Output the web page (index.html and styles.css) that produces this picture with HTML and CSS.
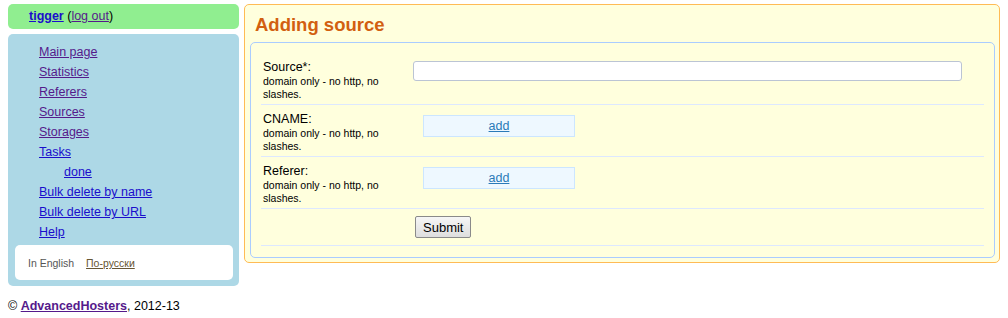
FILE: index.html
```html
<!DOCTYPE html>
<html lang="en">
<head>
  <meta charset="UTF-8">
  <title>Adding source</title>
  <link rel="stylesheet" href="styles.css">
</head>
<body>
  <div class="page">
    <div class="sidebar">
      <div class="user-box">
        <a class="user" href="#">tigger</a> (<a class="logout" href="#">log out</a>)
      </div>
      <div class="menu-box">
        <ul class="menu">
          <li><a class="visited" href="#">Main page</a></li>
          <li><a class="visited" href="#">Statistics</a></li>
          <li><a class="visited" href="#">Referers</a></li>
          <li><a class="visited" href="#">Sources</a></li>
          <li><a class="visited" href="#">Storages</a></li>
          <li><a href="#">Tasks</a></li>
          <li class="sub"><a href="#">done</a></li>
          <li><a href="#">Bulk delete by name</a></li>
          <li><a href="#">Bulk delete by URL</a></li>
          <li><a href="#">Help</a></li>
        </ul>
        <div class="lang">
          <span>In English</span>
          <a href="#">По-русски</a>
        </div>
      </div>
    </div>

    <div class="content">
      <h1>Adding source</h1>
      <div class="form-box">
        <form>
          <table class="form-table">
            <tr>
              <td class="label">Source*:<div class="hint">domain only - no http, no slashes.</div></td>
              <td class="field"><input type="text" class="text-input"></td>
            </tr>
            <tr>
              <td class="label">CNAME:<div class="hint">domain only - no http, no slashes.</div></td>
              <td class="field add-field"><div class="add-box"><a href="#">add</a></div></td>
            </tr>
            <tr>
              <td class="label">Referer:<div class="hint">domain only - no http, no slashes.</div></td>
              <td class="field add-field"><div class="add-box"><a href="#">add</a></div></td>
            </tr>
            <tr class="submit-row">
              <td class="label"></td>
              <td class="field"><button type="submit">Submit</button></td>
            </tr>
          </table>
        </form>
      </div>
    </div>
  </div>

  <div class="footer">
    © <a href="#">AdvancedHosters</a>, 2012-13
  </div>
</body>
</html>
```

FILE: styles.css
```css
body {
  font-family: 'Liberation Sans', Arial, sans-serif;
  font-size: 12.5px; line-height: 15px; color: #000;
  margin: 4px 8px; background: #fff;
}
a { color: #1a0dcc; }
a.visited { color: #551a8b; }

.page { display: flex; align-items: flex-start; gap: 5px; }

/* left column */
.sidebar { width: 231px; flex-shrink: 0; }
.user-box {
  background: #90ee90; border-radius: 5px;
  height: 25px; box-sizing: border-box; padding: 5px 21px;
}
.user-box .user { font-weight: bold; color: #1a0dcc; }
.user-box .logout { color: #551a8b; }

.menu-box {
  background: #add8e6; border-radius: 5px;
  margin-top: 5px; padding: 8px 6px 6px 7px;
}
.menu { list-style: none; margin: 0; padding: 0 0 0 24px; }
.menu li { line-height: 20px; height: 20px; }
.menu li.sub { padding-left: 25px; }
.lang {
  background: #fff; border-radius: 5px; margin-top: 3px;
  height: 35px; box-sizing: border-box; padding: 12px 13px;
  font-size: 10.5px; line-height: 13px; color: #555;
}
.lang a { color: #665533; margin-left: 9px; }

/* main panel */
.content {
  flex: 1; background: #ffffdd; border: 1px solid #ffbb55; border-radius: 5px;
  padding: 8px 4px 4px 5px;
}
h1 {
  margin: 0 0 6px; padding-left: 5px;
  font-size: 18.5px; line-height: 23px; color: #d25f10;
}
.form-box {
  border: 1px solid #aaccff; border-radius: 5px;
  padding: 10px 10px 11px;
}
.form-table { width: 100%; border-collapse: collapse; }
.form-table td { border-bottom: 1px solid #dde8ff; vertical-align: top; }
.form-table td.label { width: 148px; padding: 7px 2px 3px; }
.hint { font-size: 10.5px; line-height: 13px; }
.form-table td.field { padding: 8px 0 0; }
.form-table td.add-field { padding-top: 10px; }
.submit-row td.label { height: 26px; }
.submit-row td.field { padding-top: 7px; }

.text-input {
  width: 549px; height: 20px; box-sizing: border-box; margin: 0;
  border: 1px solid #bbc4d4; border-radius: 3px; background: #fff;
}
.add-box {
  width: 150px; height: 20px; margin-left: 10px;
  background: #eef8ff; border: 1px solid #cce6ff;
  text-align: center; line-height: 20px;
}
.add-box a { color: #2a7ab8; }
button {
  margin: 0 0 0 2px; height: 22px; padding: 0 7px;
  font-family: 'Liberation Sans', Arial, sans-serif; font-size: 13px;
  border: 1px solid #8a8a8a; border-radius: 2px;
  background: linear-gradient(#f6f6f6, #dedede);
}

.footer { margin-top: 13px; }
.footer a { font-weight: bold; color: #551a8b; }
```
